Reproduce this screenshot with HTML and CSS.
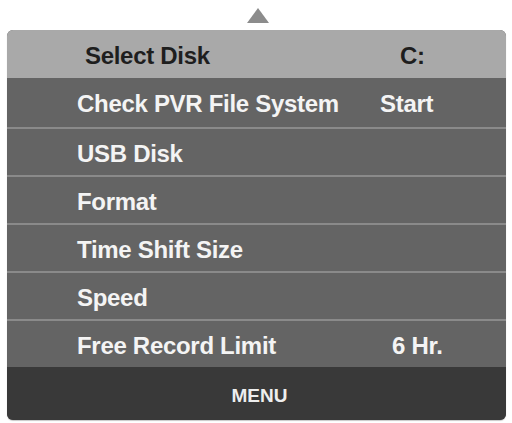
FILE: index.html
```html
<!DOCTYPE html>
<html>
<head>
<meta charset="utf-8">
<link rel="stylesheet" href="styles.css">
</head>
<body>
<div class="arrow-wrap"><div class="arrow"></div></div>
<div class="panel">
  <div class="row head"><span class="label">Select Disk</span><span class="value v-c">C:</span></div>
  <div class="row first"><span class="label">Check PVR File System</span><span class="value v-start">Start</span></div>
  <div class="row"><span class="label">USB Disk</span><span class="value"></span></div>
  <div class="row"><span class="label">Format</span><span class="value"></span></div>
  <div class="row"><span class="label">Time Shift Size</span><span class="value"></span></div>
  <div class="row"><span class="label">Speed</span><span class="value"></span></div>
  <div class="row"><span class="label">Free Record Limit</span><span class="value v-hr">6 Hr.</span></div>
  <div class="menu">MENU</div>
</div>
</body>
</html>
```
FILE: styles.css
```css
html, body {
  margin: 0;
  padding: 0;
  background: #ffffff;
}
body {
  width: 512px;
  height: 423px;
  font-family: "Liberation Sans", Arial, sans-serif;
  font-weight: bold;
}
.arrow-wrap {
  height: 30px;
  display: flex;
  justify-content: center;
  padding-left: 4px;
  box-sizing: border-box;
  padding-top: 8px;
}
.arrow {
  width: 0;
  height: 0;
  border-left: 11px solid transparent;
  border-right: 11px solid transparent;
  border-bottom: 15px solid #8c8c8c;
}
.panel {
  margin-left: 7px;
  width: 499px;
  border-radius: 6px;
  overflow: hidden;
  background: #646464;
  box-shadow: 0 1px 1px #c8c8c8;
}
.row {
  box-sizing: border-box;
  height: 48px;
  display: flex;
  align-items: center;
  padding-top: 3px;
  border-top: 2px solid #8a8a8a;
  color: #f4f4f4;
  font-size: 24px;
  letter-spacing: -0.3px;
  background: #646464;
}
.row.first {
  border-top: none;
  height: 49px;
}
.row.head {
  border-top: none;
  background: #a9a9a9;
  color: #1e1e1e;
  padding-top: 4px;
}
.label {
  padding-left: 70px;
  width: 303px;
  flex: none;
}
.head .label {
  padding-left: 78px;
}
.value {
  flex: 1;
}
.v-c { padding-left: 12px; }
.v-hr { padding-left: 12px; }
.menu {
  height: 53px;
  background: #393939;
  color: #eeeeee;
  display: flex;
  align-items: center;
  justify-content: center;
  font-size: 19px;
  padding-left: 6px;
  padding-top: 4px;
  box-sizing: border-box;
}
```
